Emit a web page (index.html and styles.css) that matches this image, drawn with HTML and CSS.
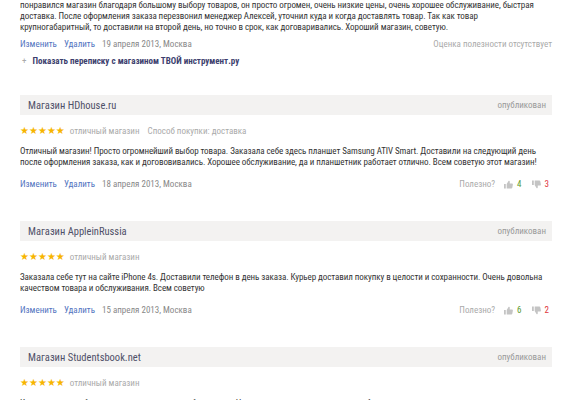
FILE: index.html
```html
<!DOCTYPE html>
<html lang="ru">
<head>
    <meta charset="UTF-8">
    <meta name="viewport" content="width=device-width, initial-scale=1.0">
    <title>Мои отзывы о магазинах</title>
    <link rel="stylesheet" href="styles.css">
</head>
<body>
    <div class="reviews">

        <div class="review review-first">
            <p class="review-text">понравился магазин благодаря большому выбору товаров, он просто огромен, очень низкие цены, очень хорошее обслуживание, быстрая<br>доставка. После оформления заказа перезвонил менеджер Алексей, уточнил куда и когда доставлять товар. Так как товар<br>крупногабаритный, то доставили на второй день, но точно в срок, как договаривались. Хороший магазин, советую.</p>
            <div class="review-actions">
                <div class="review-meta">
                    <a href="#" class="link">Изменить</a>
                    <a href="#" class="link">Удалить</a>
                    <span class="date">19 апреля 2013, Москва</span>
                </div>
                <span class="no-votes">Оценка полезности отсутствует</span>
            </div>
            <div class="thread">
                <span class="thread-plus">+</span>
                <a href="#" class="thread-link">Показать переписку с магазином ТВОЙ инструмент.ру</a>
            </div>
        </div>

        <div class="review">
            <div class="shop-head">
                <span class="shop-name">Магазин HDhouse.ru</span>
                <span class="status">опубликован</span>
            </div>
            <div class="rating">
                <span class="stars">★★★★★</span>
                <span class="grade">отличный магазин</span>
                <span class="grade">Способ покупки: доставка</span>
            </div>
            <p class="review-text">Отличный магазин! Просто огромнейший выбор товара. Заказала себе здесь планшет Samsung ATIV Smart. Доставили на следующий день<br>после оформления заказа, как и догововивались. Хорошее обслуживание, да и планшетник работает отлично. Всем советую этот магазин!</p>
            <div class="review-actions">
                <div class="review-meta">
                    <a href="#" class="link">Изменить</a>
                    <a href="#" class="link">Удалить</a>
                    <span class="date">18 апреля 2013, Москва</span>
                </div>
                <div class="votes">
                    <span class="votes-label">Полезно?</span>
                    <svg class="thumb" viewBox="0 0 10 10"><path d="M0 4.5h2v5H0zM3 4.5L5 1.2c.4-.7 1.4-.5 1.4.4V4h2.6c.6 0 1 .5.9 1.1l-.7 3.6c-.1.5-.5.8-1 .8H3z"/></svg>
                    <span class="votes-up">4</span>
                    <svg class="thumb" viewBox="0 0 10 10"><path d="M0 .5h2v5H0zM3 5.5L5 8.8c.4.7 1.4.5 1.4-.4V6h2.6c.6 0 1-.5.9-1.1L9.2 1.3C9.1.8 8.7.5 8.2.5H3z"/></svg>
                    <span class="votes-down">3</span>
                </div>
            </div>
        </div>

        <div class="review">
            <div class="shop-head">
                <span class="shop-name">Магазин AppleinRussia</span>
                <span class="status">опубликован</span>
            </div>
            <div class="rating">
                <span class="stars">★★★★★</span>
                <span class="grade">отличный магазин</span>
            </div>
            <p class="review-text">Заказала себе тут на сайте iPhone 4s. Доставили телефон в день заказа. Курьер доставил покупку в целости и сохранности. Очень довольна<br>качеством товара и обслуживания. Всем советую</p>
            <div class="review-actions">
                <div class="review-meta">
                    <a href="#" class="link">Изменить</a>
                    <a href="#" class="link">Удалить</a>
                    <span class="date">15 апреля 2013, Москва</span>
                </div>
                <div class="votes">
                    <span class="votes-label">Полезно?</span>
                    <svg class="thumb" viewBox="0 0 10 10"><path d="M0 4.5h2v5H0zM3 4.5L5 1.2c.4-.7 1.4-.5 1.4.4V4h2.6c.6 0 1 .5.9 1.1l-.7 3.6c-.1.5-.5.8-1 .8H3z"/></svg>
                    <span class="votes-up">6</span>
                    <svg class="thumb" viewBox="0 0 10 10"><path d="M0 .5h2v5H0zM3 5.5L5 8.8c.4.7 1.4.5 1.4-.4V6h2.6c.6 0 1-.5.9-1.1L9.2 1.3C9.1.8 8.7.5 8.2.5H3z"/></svg>
                    <span class="votes-down">2</span>
                </div>
            </div>
        </div>

        <div class="review">
            <div class="shop-head">
                <span class="shop-name">Магазин Studentsbook.net</span>
                <span class="status">опубликован</span>
            </div>
            <div class="rating">
                <span class="stars">★★★★★</span>
                <span class="grade">отличный магазин</span>
            </div>
            <p class="review-text">Купила здесь учебники для сына к новому учебному году. Цены приятно удивили, доставили быстро и аккуратно.</p>
        </div>

    </div>
</body>
</html>
```

FILE: styles.css
```css
body {
    margin: 0;
    padding: 0;
    background-color: #fff;
    font-family: "Roboto Condensed", "Liberation Sans", Arial, sans-serif;
    font-size: 9px;
    color: #333;
}

.reviews {
    width: 532px;
    margin-left: 20px;
}

.review {
    padding-bottom: 30px;
}

.review-first {
    padding-bottom: 26px;
}

.review-text {
    margin: 0;
    line-height: 11px;
    letter-spacing: -0.07px;
    white-space: nowrap;
    color: #333;
}

.review-actions {
    display: flex;
    justify-content: space-between;
    align-items: center;
    margin-top: 10px;
    line-height: 13px;
}

.review-first .review-actions {
    margin-top: 5px;
}

.review-meta {
    display: flex;
    gap: 7px;
}

.link {
    color: #5273c0;
    text-decoration: none;
}

.date {
    color: #888;
}

.no-votes {
    color: #aaa;
}

.thread {
    display: flex;
    gap: 6px;
    margin-top: 3px;
    padding-left: 2px;
    line-height: 15px;
}

.thread-plus {
    color: #aaa;
}

.thread-link {
    color: #3d3f6e;
    font-weight: bold;
    text-decoration: none;
}

/* серая плашка с названием магазина */
.shop-head {
    display: flex;
    justify-content: space-between;
    align-items: center;
    height: 20px;
    padding: 0 6px 0 8px;
    background-color: #f3f2f1;
}

.shop-name {
    font-size: 10.5px;
    color: #4f5068;
}

.status {
    color: #999;
}

.rating {
    display: flex;
    align-items: center;
    gap: 5px;
    margin-top: 10px;
    line-height: 12px;
}

.rating .grade + .grade {
    margin-left: 3px;
}

.stars {
    font-family: "DejaVu Sans", sans-serif;
    font-size: 10px;
    color: #f7b500;
}

.grade {
    color: #aaa;
}

.rating + .review-text {
    margin-top: 9px;
}

.votes {
    display: flex;
    align-items: center;
    gap: 4px;
    margin-right: 3px;
}

.votes-label {
    color: #aaa;
    margin-right: 5px;
}

.thumb {
    width: 9px;
    height: 9px;
    fill: #c4c4c4;
}

.votes-up {
    color: #5c9a2e;
    margin-right: 6px;
}

.votes-down {
    color: #e0353b;
}
```
